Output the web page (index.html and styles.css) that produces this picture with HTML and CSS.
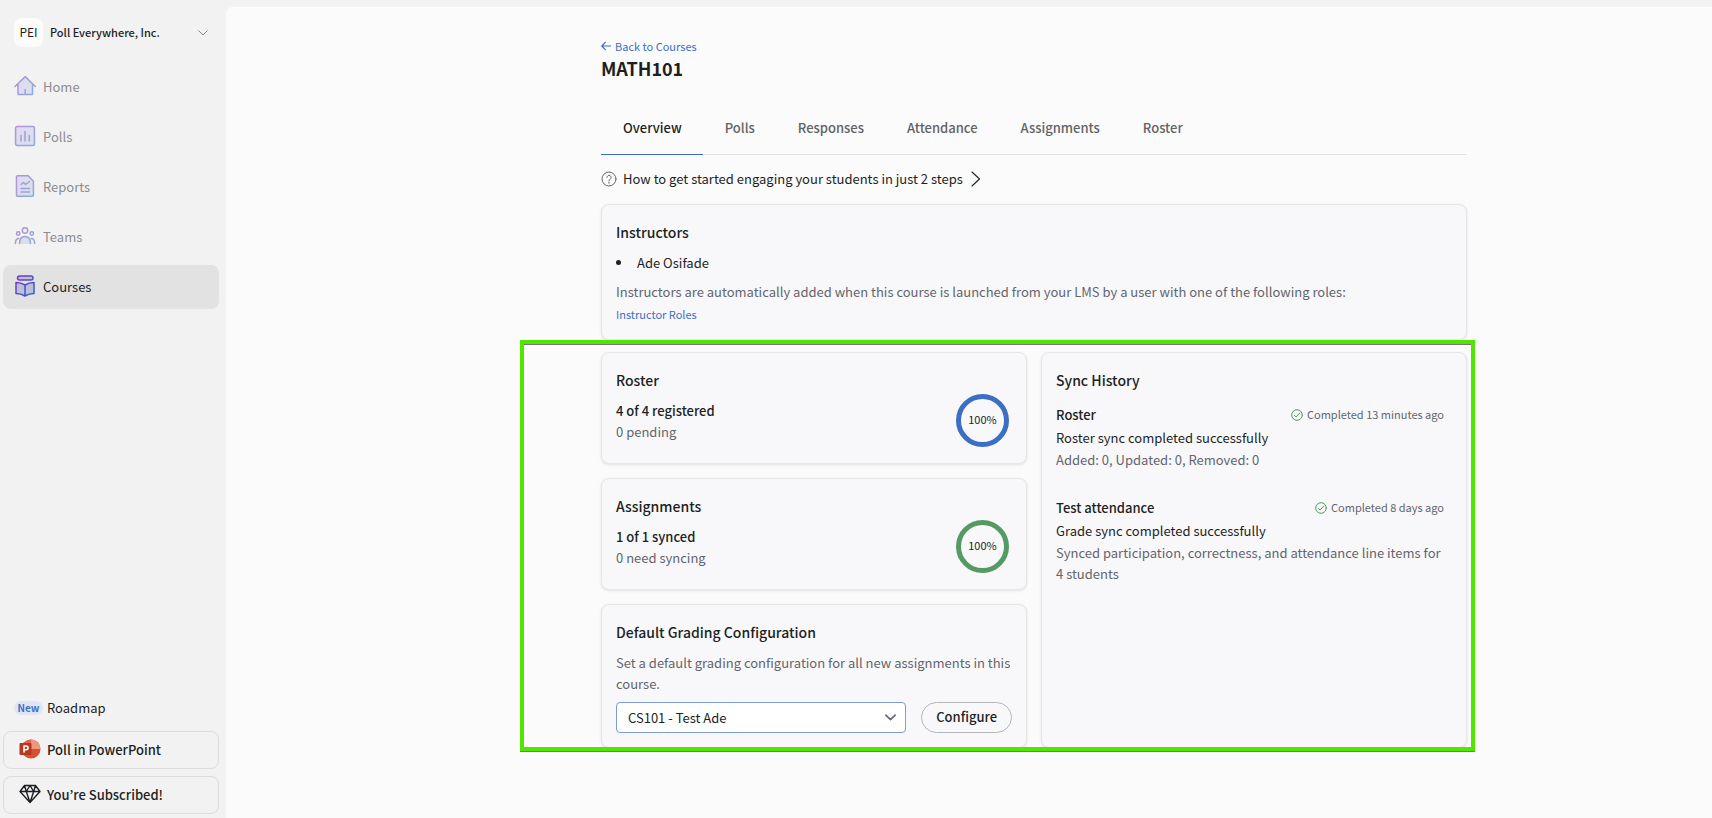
FILE: index.html
```html
<!DOCTYPE html>
<html lang="en">
<head>
<meta charset="utf-8">
<title>MATH101 - Courses</title>
<link rel="stylesheet" href="styles.css">
</head>
<body>
<svg class="defs" aria-hidden="true">
  <defs>
    <linearGradient id="brand" gradientUnits="userSpaceOnUse" x1="0" y1="0" x2="22" y2="22">
      <stop offset="0.1" stop-color="#7a35c0"/>
      <stop offset="0.9" stop-color="#2b66c8"/>
    </linearGradient>
  </defs>
</svg>
<div class="app">
  <aside class="sidebar">
    <button class="org" type="button">
      <span class="org-badge">PEI</span>
      <span class="org-name">Poll Everywhere, Inc.</span>
      <svg class="org-caret" viewBox="0 0 10 6"><path d="M0.8 0.8 5 5 9.2 0.8"/></svg>
    </button>
    <nav class="nav">
      <a class="nav-item" href="#">
        <svg class="nav-icon" viewBox="0 0 22 22"><path class="tint" d="M4 9v10.400h14.500V9L11.200 2z"/><path d="M1 11.500 11.200 1.600 21.300 11.500M4 9v10.400h14.500V9M11.200 19v-4.500"/></svg>
        Home</a>
      <a class="nav-item" href="#">
        <svg class="nav-icon" viewBox="0 0 22 22"><rect class="tint" x="1.600" y="1.600" width="18.800" height="18.800" rx="1.500"/><rect x="1.600" y="1.600" width="18.800" height="18.800" rx="1.500"/><path d="M7 10.500v5.500M11 6.500V16M15.200 10.500V16"/></svg>
        Polls</a>
      <a class="nav-item" href="#">
        <svg class="nav-icon" viewBox="0 0 22 22"><path class="tint" d="M3.500.8h10.700l5.200 5.400v14a1 1 0 0 1-1 1H3.500a1 1 0 0 1-1-1V1.800a1 1 0 0 1 1-1z"/><path d="M3.500.8h10.700l5.200 5.400v14a1 1 0 0 1-1 1H3.500a1 1 0 0 1-1-1V1.800a1 1 0 0 1 1-1zM7 9.500l2.500-2 2 2L15.500 6.500M7 13.500h8.500M7 17h8.500"/></svg>
        Reports</a>
      <a class="nav-item" href="#">
        <svg class="nav-icon" viewBox="0 0 22 22"><path class="tint" d="M5.500 19c0-5 2-7 5.500-7s5.500 2 5.500 7z"/><circle cx="11" cy="5.500" r="2.700"/><circle cx="4.200" cy="8.500" r="1.700"/><circle cx="17.800" cy="8.500" r="1.700"/><path d="M5.500 18.500c0-5 2-7 5.500-7s5.500 2 5.500 7M1.400 18.500c0-3.500 1-5 3.400-5M20.600 18.500c0-3.500-1-5-3.400-5"/></svg>
        Teams</a>
      <a class="nav-item is-active" href="#" aria-current="page">
        <svg class="nav-icon" viewBox="0 0 22 22"><path class="tint" d="M2 7.500q5 0 9 2.500 4-2.500 9-2.500v11q-5 0-9 2.500-4-2.500-9-2.500z"/><rect class="tint" x="3.500" y="1" width="15.500" height="4" rx="2"/><rect x="3.500" y="1" width="15.500" height="4" rx="2"/><path d="M2 7.500q5 0 9 2.500 4-2.500 9-2.500v11q-5 0-9 2.500-4-2.500-9-2.500zM11 10v11"/></svg>
        Courses</a>
    </nav>
    <div class="side-foot">
      <a class="roadmap" href="#"><span class="tag">New</span>Roadmap</a>
      <button class="side-btn" type="button">
        <svg class="side-icon" viewBox="0 0 22 22"><circle cx="12" cy="11" r="9.500" fill="#d35230"/><path d="M12 1.500a9.500 9.500 0 0 1 9.500 9.500H12z" fill="#f0967c"/><path d="M12 1.500A9.500 9.500 0 0 0 2.500 11H12z" fill="#e0664a"/><rect x="0.500" y="5" width="12" height="12" rx="1" fill="#b7371f"/><path d="M5 14V8h2.200a1.800 1.800 0 0 1 0 3.700H5" fill="none" stroke="#fff" stroke-width="1.600"/></svg>
        Poll in PowerPoint</button>
      <button class="side-btn" type="button">
        <svg class="side-icon gem" viewBox="0 0 22 22"><path d="M5.500 2.500h11L21 8.500 11 19.500 1 8.500zM1 8.500h20M5.500 2.500l1.800 6L11 19.500l3.700-11 1.800-6M7.300 8.500 11 2.500l3.700 6"/></svg>
        You’re Subscribed!</button>
    </div>
  </aside>
  <main class="main">
    <div class="content">
      <a class="back" href="#"><svg class="back-arrow" viewBox="0 0 10 10"><path d="M9.600 5H.8M4.300 1.300.8 5l3.500 3.700"/></svg>Back to Courses</a>
      <h1 class="title">MATH101</h1>
      <nav class="tabs">
        <a class="tab is-active" href="#">Overview</a>
        <a class="tab" href="#">Polls</a>
        <a class="tab" href="#">Responses</a>
        <a class="tab" href="#">Attendance</a>
        <a class="tab" href="#">Assignments</a>
        <a class="tab" href="#">Roster</a>
      </nav>
      <button class="howto" type="button">
        <svg class="help" viewBox="0 0 16 16"><circle cx="8" cy="8" r="7"/><path d="M5.900 6.400a2.100 2.100 0 1 1 3.300 1.700Q8 8.800 8 10M8 11.300v1"/></svg>
        How to get started engaging your students in just 2 steps
        <svg class="next" viewBox="0 0 10 16"><path d="M1 1l7.500 7L1 15"/></svg>
      </button>
      <section class="card instructors">
        <h2 class="card-title">Instructors</h2>
        <ul class="people"><li>Ade Osifade</li></ul>
        <p class="muted">Instructors are automatically added when this course is launched from your LMS by a user with one of the following roles:</p>
        <a class="link" href="#">Instructor Roles</a>
      </section>
      <div class="panels">
        <div class="column">
          <section class="card stat">
            <div class="stat-text">
              <h2 class="card-title">Roster</h2>
              <p class="strong">4 of 4 registered</p>
              <p class="muted">0 pending</p>
            </div>
            <div class="ring">100%</div>
          </section>
          <section class="card stat">
            <div class="stat-text">
              <h2 class="card-title">Assignments</h2>
              <p class="strong">1 of 1 synced</p>
              <p class="muted">0 need syncing</p>
            </div>
            <div class="ring ring-green">100%</div>
          </section>
          <section class="card config">
            <h2 class="card-title">Default Grading Configuration</h2>
            <label class="muted" for="grading">Set a default grading configuration for all new assignments in this course.</label>
            <div class="grading">
              <div class="select-wrap">
                <select class="select" id="grading"><option>CS101 - Test Ade</option></select>
                <svg class="select-caret" viewBox="0 0 10 6"><path d="M0.800 0.800 5 5 9.200 0.800"/></svg>
              </div>
              <button class="configure" type="button">Configure</button>
            </div>
          </section>
        </div>
        <section class="card history">
          <h2 class="card-title">Sync History</h2>
          <article class="sync">
            <div class="sync-head"><h3 class="strong">Roster</h3><span class="status"><svg class="check" viewBox="0 0 12 12"><circle cx="6" cy="6" r="5.300"/><path d="M3.400 6.300l1.700 1.700L8.700 4"/></svg>Completed 13 minutes ago</span></div>
            <p>Roster sync completed successfully</p>
            <p class="muted">Added: 0, Updated: 0, Removed: 0</p>
          </article>
          <article class="sync">
            <div class="sync-head"><h3 class="strong">Test attendance</h3><span class="status"><svg class="check" viewBox="0 0 12 12"><circle cx="6" cy="6" r="5.300"/><path d="M3.400 6.300l1.700 1.700L8.700 4"/></svg>Completed 8 days ago</span></div>
            <p>Grade sync completed successfully</p>
            <p class="muted">Synced participation, correctness, and attendance line items for 4 students</p>
          </article>
        </section>
        <div class="highlight" aria-hidden="true"></div>
      </div>
    </div>
  </main>
</div>
</body>
</html>
```
FILE: styles.css
```css
* { box-sizing: border-box; margin: 0; padding: 0; }
body {
  background: #f2f2f2;
  color: #1d1f23;
  font: 400 13px/21px "Noto Sans CJK KR", "Noto Sans", sans-serif;
}
button, select { font: inherit; color: inherit; background: none; border: 0; text-align: left; cursor: pointer; }
a { color: inherit; text-decoration: none; }
svg { flex: none; fill: none; stroke-linecap: round; stroke-linejoin: round; }
.defs { position: absolute; width: 0; height: 0; }

.app { display: grid; grid-template-columns: 226px 1fr; min-height: 100vh; }

.sidebar { display: flex; flex-direction: column; padding: 18px 7px 4px 3px; }
.org { display: flex; align-items: center; gap: 7px; padding: 0 11px; font-size: 11px; font-weight: 500; }
.org-badge { width: 29px; height: 29px; border-radius: 8px; background: #fcfcfd; font-size: 12px; line-height: 27px; text-align: center; font-weight: 400; }
.org-name { flex: 1; }
.org-caret { width: 10px; height: 6px; stroke: #85878b; stroke-width: 1; }
.nav { display: grid; gap: 6px; margin-top: 18px; }
.nav-item { display: flex; align-items: center; gap: 7px; height: 44px; padding: 0 11px 2px; border-radius: 8px; color: #8c8d90; }
.nav-icon { width: 22px; height: 22px; stroke: url(#brand); stroke-width: 1.5; opacity: 0.5; }
.nav-icon .tint { fill: #3d3ec8; fill-opacity: 0.22; stroke: none; }
.nav-item.is-active { background: #e2e2e2; color: #1d1f23; }
.nav-item.is-active .nav-icon { opacity: 1; }
.side-foot { display: grid; gap: 7px; margin-top: auto; }
.roadmap { display: flex; align-items: center; gap: 4px; padding: 0 11px 6px; }
.tag { width: 29px; border-radius: 7px; background: #dfe5f2; color: #3f6fc6; font-size: 10px; font-weight: 700; line-height: 14px; text-align: center; }
.side-btn { display: flex; align-items: center; gap: 6px; height: 38px; padding: 0 15px 2px; border: 1px solid #dcdcdc; border-radius: 8px; font-weight: 500; }
.side-icon { width: 22px; height: 22px; }
.gem { stroke: #1d1f23; stroke-width: 1.4; }

.main { margin-top: 7px; padding: 30px 40px 40px 170px; border-top-left-radius: 6px; background: #fbfbfb; }
.content { max-width: 866px; margin: 0 auto; }
.back { display: flex; align-items: center; gap: 4px; color: #3a6fc5; font-size: 11px; line-height: 18px; }
.back-arrow { width: 10px; height: 10px; stroke: #3a6fc5; stroke-width: 1.2; }
.title { font-size: 18px; font-weight: 700; line-height: 26px; }
.tabs { display: flex; margin-top: 20px; border-bottom: 1px solid #e2e2e4; }
.tab { height: 54px; margin-bottom: -1px; padding: 0 21px 0 22px; color: #626367; font-weight: 500; line-height: 54px; }
.tab.is-active { border-bottom: 1px solid #3a6fc5; color: #1d1f23; }
.howto { display: flex; align-items: center; gap: 6px; margin-top: 13px; }
.help { width: 16px; height: 16px; stroke: #63656a; stroke-width: 1; }
.next { width: 10px; height: 16px; margin-left: 2px; stroke: #1d1f23; stroke-width: 1.1; }

.card { padding: 15px 14px 14px; border: 1px solid #e6e6e9; border-radius: 8px; background: #f8f8fb; box-shadow: 0 1px 3px rgba(0, 0, 0, 0.1); }
.card-title { margin-bottom: 8px; font-size: 14px; font-weight: 500; line-height: 24px; }
.muted { color: #63656b; }
.strong { font-size: 13px; font-weight: 500; }
.link { display: block; margin-top: 2px; color: #3a6fc5; font-size: 11px; }
.instructors { margin-top: 15px; }
.people { margin-bottom: 8px; list-style: none; }
.people li { display: flex; align-items: center; gap: 16px; }
.people li::before { content: ""; width: 5px; height: 5px; border-radius: 50%; background: #1d1f23; }
.panels { position: relative; display: grid; grid-template-columns: 1fr 1fr; gap: 14px; margin-top: 12px; }
.highlight { position: absolute; inset: -12px -8px -3px -81px; border: 4px solid #4fe600; box-shadow: 0 1px #777, inset 0 1px #777; pointer-events: none; }
.column { display: grid; gap: 14px; }
.stat { display: flex; align-items: flex-end; justify-content: space-between; padding-bottom: 16px; }
.stat-text { padding-bottom: 5px; }
.ring { width: 53px; height: 53px; margin-right: 3px; border: 5px solid #3a6fc5; border-radius: 50%; font-size: 11px; line-height: 41px; text-align: center; }
.ring-green { border-color: #559a62; }
.config label { display: block; }
.grading { display: flex; gap: 15px; margin-top: 8px; }
.select-wrap { position: relative; flex: 1; }
.select { width: 100%; height: 31px; padding: 0 11px; appearance: none; border: 1px solid #7d9cd8; border-radius: 4px; background: #fff; }
.select-caret { position: absolute; right: 10px; top: 12px; width: 11px; height: 7px; stroke: #63687a; stroke-width: 1.5; pointer-events: none; }
.configure { height: 31px; padding: 0 14px 2px; border: 1px solid #b5b6ba; border-radius: 16px; font-weight: 500; }
.sync { display: grid; gap: 1px; margin-top: 12px; padding-right: 8px; }
.sync + .sync { margin-top: 27px; }
.sync-head { display: flex; justify-content: space-between; margin-bottom: 1px; }
.status { display: flex; align-items: center; gap: 4px; color: #63656b; font-size: 11px; }
.check { width: 12px; height: 12px; stroke: #559a62; stroke-width: 1; }
```
